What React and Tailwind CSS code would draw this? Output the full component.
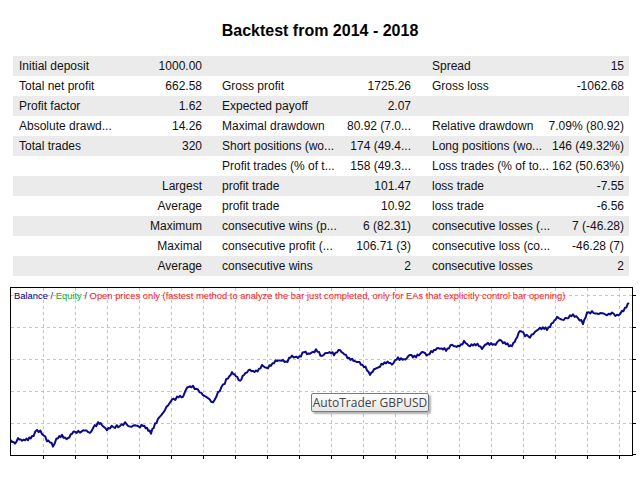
import React from 'react';

const rows = [
  ['Initial deposit', '1000.00', '', '', 'Spread', '15'],
  ['Total net profit', '662.58', 'Gross profit', '1725.26', 'Gross loss', '-1062.68'],
  ['Profit factor', '1.62', 'Expected payoff', '2.07', '', ''],
  ['Absolute drawd...', '14.26', 'Maximal drawdown', '80.92 (7.0...', 'Relative drawdown', '7.09% (80.92)'],
  ['Total trades', '320', 'Short positions (wo...', '174 (49.4...', 'Long positions (wo...', '146 (49.32%)'],
  ['', '', 'Profit trades (% of t...', '158 (49.3...', 'Loss trades (% of to...', '162 (50.63%)'],
  ['', 'Largest', 'profit trade', '101.47', 'loss trade', '-7.55'],
  ['', 'Average', 'profit trade', '10.92', 'loss trade', '-6.56'],
  ['', 'Maximum', 'consecutive wins (p...', '6 (82.31)', 'consecutive losses (...', '7 (-46.28)'],
  ['', 'Maximal', 'consecutive profit (...', '106.71 (3)', 'consecutive loss (co...', '-46.28 (7)'],
  ['', 'Average', 'consecutive wins', '2', 'consecutive losses', '2'],
];

// balance curve, page coordinates
const curve = [
  [11, 440], [12, 442], [15, 443], [18, 439], [22, 441], [25, 439], [28, 440], [32, 437], [37, 430],
  [42, 433], [47, 440], [50, 442], [53, 446], [58, 437], [62, 435], [65, 439], [68, 438], [72, 433],
  [75, 432], [80, 432], [85, 430], [90, 433], [93, 428], [98, 423], [102, 425], [107, 430], [110, 427],
  [115, 427], [120, 426], [125, 423], [130, 427], [135, 425], [140, 427], [143, 425], [147, 428],
  [151, 433], [155, 425], [158, 419], [163, 413], [168, 405], [172, 400], [177, 398], [180, 396],
  [183, 397], [187, 388], [190, 386], [193, 387], [198, 390], [203, 395], [208, 398], [213, 403],
  [218, 393], [223, 385], [228, 378], [232, 372], [236, 376], [240, 382], [244, 374], [250, 370],
  [256, 372], [262, 366], [268, 368], [274, 362], [280, 360], [286, 362], [292, 356], [298, 358],
  [304, 352], [310, 354], [316, 350], [322, 356], [328, 352], [334, 354], [340, 350], [346, 356],
  [352, 360], [358, 362], [364, 366], [370, 374], [374, 370], [380, 366], [386, 362], [392, 364],
  [398, 358], [404, 360], [410, 355], [416, 357], [422, 352], [428, 355], [434, 350], [440, 348],
  [446, 350], [452, 345], [458, 347], [464, 342], [470, 346], [476, 344], [482, 348], [488, 343],
  [494, 345], [500, 340], [506, 344], [512, 346], [516, 340], [520, 330], [525, 335], [530, 337],
  [535, 332], [540, 328], [547, 329], [553, 323], [557, 317], [562, 320], [567, 318], [573, 315],
  [578, 318], [583, 323], [587, 313], [592, 312], [597, 314], [602, 313], [607, 315], [612, 313],
  [617, 316], [622, 312], [625, 308], [629, 303],
];

function linePoints() {
  const out = [];
  for (let i = 0; i < curve.length - 1; i++) {
    const [x1, y1] = curve[i];
    const [x2, y2] = curve[i + 1];
    const steps = Math.max(1, Math.round((x2 - x1) / 1.5));
    for (let s = 0; s < steps; s++) {
      const t = s / steps;
      const x = x1 + (x2 - x1) * t;
      const n = Math.sin(x * 2.3) * 0.9 + Math.sin(x * 5.1) * 0.6;
      out.push(`${(x - 11).toFixed(1)},${(y1 + (y2 - y1) * t + n - 288).toFixed(1)}`);
    }
  }
  const [lx, ly] = curve[curve.length - 1];
  out.push(`${lx - 11},${ly - 288}`);
  return out.join(' ');
}

const vx = Array.from({ length: 19 }, (_, i) => 32 + i * 32);
const hy = [7, 39, 71, 103, 135];

function Chart() {
  return (
    <div className="relative ml-[10px] mt-[11px] h-[169px] w-[623px] border border-black bg-white">
      <svg className="absolute left-0 top-0 h-[167px] w-[621px] overflow-visible" viewBox="0 0 621 167">
        {vx.map((x) => (
          <line key={'v' + x} x1={x + 0.5} y1={0} x2={x + 0.5} y2={167} stroke="#c4c4c4" strokeDasharray="3 3" />
        ))}
        {hy.map((y) => (
          <line key={'h' + y} x1={0} y1={y + 0.5} x2={621} y2={y + 0.5} stroke="#c4c4c4" strokeDasharray="3 3" />
        ))}
        {vx.map((x) => (
          <line key={'bt' + x} x1={x + 0.5} y1={168} x2={x + 0.5} y2={171} stroke="#000" />
        ))}
        {[...hy, 166].map((y) => (
          <line key={'rt' + y} x1={622} y1={y + 0.5} x2={625} y2={y + 0.5} stroke="#000" />
        ))}
        <polyline points={linePoints()} fill="none" stroke="#0b0b8a" strokeWidth="2" strokeLinejoin="round" />
      </svg>
      <div className="absolute left-[3px] top-[2px] whitespace-nowrap text-[9.4px] leading-[12px] font-['Liberation_Sans',Arial,sans-serif]">
        <span className="text-[#00008b]">Balance</span>
        <span className="text-[#333]"> / </span>
        <span className="text-[#22a822]">Equity</span>
        <span className="text-[#333]"> / </span>
        <span className="text-[#ee2222]">
          Open prices only (fastest method to analyze the bar just completed, only for EAs that explicitly control bar opening)
        </span>
      </div>
      <div className="absolute left-[300px] top-[105px] flex h-[19px] w-[118px] items-center justify-center rounded-[2px] border border-[#7a7a7a] bg-gradient-to-b from-white to-[#e6e6e6] font-['Open_Sans',sans-serif] text-[12px] text-[#444] shadow-[2px_2px_2px_rgba(0,0,0,0.3)]">
        AutoTrader GBPUSD
      </div>
    </div>
  );
}

export default function App() {
  return (
    <div className="h-[480px] w-[640px] overflow-hidden bg-white font-['Liberation_Sans',Arial,sans-serif] text-black">
      <h1 className="pt-[20px] text-center text-[16px] font-bold leading-[22px]">
        Backtest from 2014 - 2018
      </h1>
      <div className="ml-[13px] mt-[14px] w-[616px] text-[12px] text-[#111]">
        {rows.map((r, i) => (
          <div
            key={i}
            className={
              'grid h-[20px] grid-cols-[129px_74px_124px_77px_128px_84px] items-center whitespace-nowrap ' +
              (i % 2 === 0 ? 'bg-[#ebebeb]' : 'bg-white')
            }
          >
            <div className="pl-[6px]">{r[0]}</div>
            <div className="pr-[14px] text-right">{r[1]}</div>
            <div className="pl-[6px]">{r[2]}</div>
            <div className="pr-[6px] text-right">{r[3]}</div>
            <div className="pl-[15px]">{r[4]}</div>
            <div className="pr-[5px] text-right">{r[5]}</div>
          </div>
        ))}
      </div>
      <Chart />
    </div>
  );
}
